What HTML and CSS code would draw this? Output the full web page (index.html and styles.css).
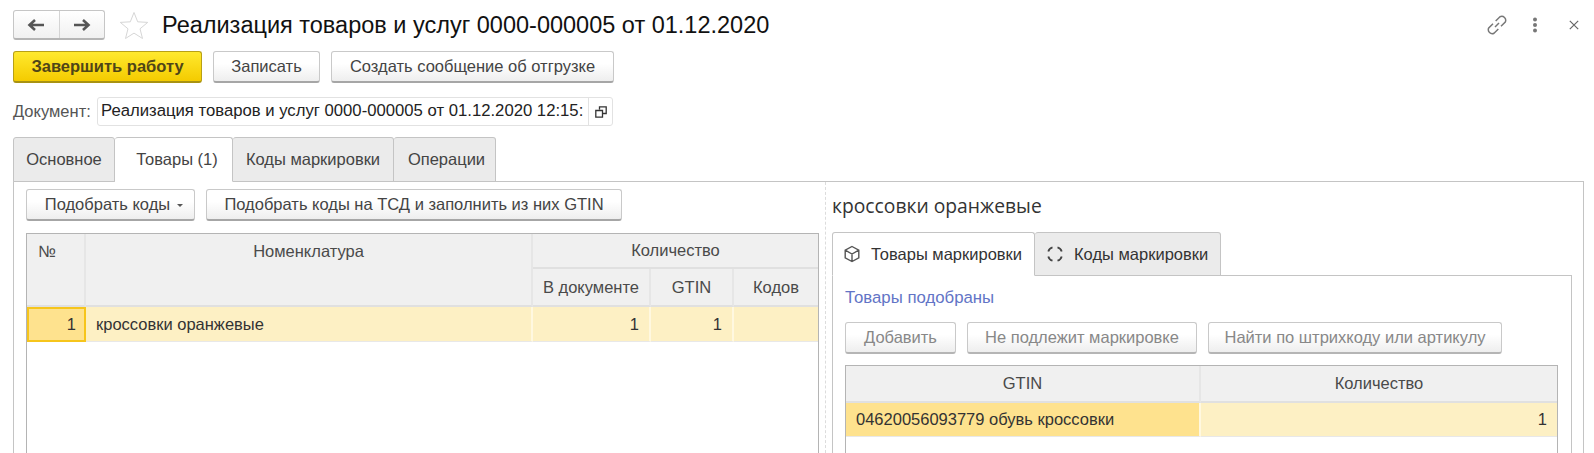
FILE: index.html
```html
<!DOCTYPE html>
<html lang="ru">
<head>
<meta charset="utf-8">
<title>Реализация товаров и услуг</title>
<link rel="stylesheet" href="styles.css">
</head>
<body>
<div class="page">
  <header class="head">
    <div class="nav">
      <button class="nav-btn"><svg width="20" height="14" viewBox="0 0 20 14"><path d="M18 7H5M9 2L3.500 7 9 12" fill="none" stroke="#555" stroke-width="2.600"/></svg></button>
      <button class="nav-btn"><svg width="20" height="14" viewBox="0 0 20 14"><path d="M2 7h13M11 2l5.500 5L11 12" fill="none" stroke="#555" stroke-width="2.600"/></svg></button>
    </div>
    <svg class="star" width="30" height="28" viewBox="0 0 30 28"><path d="M15 1.500l3.700 9.300 10 .6-7.700 6.400 2.500 9.700L15 22.100l-8.500 5.400 2.500-9.700-7.700-6.400 10-.6z" fill="#fff" stroke="#d6d6d6"/></svg>
    <h1 class="title">Реализация товаров и услуг 0000-000005 от 01.12.2020</h1>
    <div class="win-icons">
      <svg width="20" height="20" viewBox="2.500 2.500 15 15"><path d="M8.500 11.500l3-3M7 9l-3.200 3.200a3 3 0 0 0 4 4L11 13M9 7l3.200-3.200a3 3 0 0 1 4 4L13 11" fill="none" stroke="#777" stroke-width="1.100"/></svg>
      <svg width="6" height="16" viewBox="0 0 6 16"><circle cx="3" cy="2.500" r="2" fill="#777"/><circle cx="3" cy="8" r="2" fill="#777"/><circle cx="3" cy="13.500" r="2" fill="#777"/></svg>
      <svg width="10" height="10" viewBox="0 0 10 10"><path d="M.8.800l8.400 8.400M9.200.800L.8 9.200" stroke="#666" stroke-width="1.200"/></svg>
    </div>
  </header>

  <div class="actions">
    <button class="btn btn-primary btn-finish">Завершить работу</button>
    <button class="btn btn-save">Записать</button>
    <button class="btn btn-send">Создать сообщение об отгрузке</button>
  </div>

  <div class="doc-row">
    <span class="doc-label">Документ:</span>
    <div class="doc-field">
      <span class="doc-value">Реализация товаров и услуг 0000-000005 от 01.12.2020 12:15:</span>
      <span class="doc-open"><svg width="12" height="12" viewBox="0 0 12 12"><path d="M4.500 3.500V.8h6.700v6.700H8M.8 4.500h6.700v6.700H.8z" fill="none" stroke="#333" stroke-width="1.300"/></svg></span>
    </div>
  </div>

  <nav class="tabs">
    <div class="tab t1">Основное</div>
    <div class="tab t2 active">Товары (1)</div>
    <div class="tab t3">Коды маркировки</div>
    <div class="tab t4">Операции</div>
  </nav>

  <section class="panel">
    <div class="left">
      <div class="toolbar">
        <button class="btn btn-pick">Подобрать коды<span class="caret"></span></button>
        <button class="btn btn-tsd">Подобрать коды на ТСД и заполнить из них GTIN</button>
      </div>
      <div class="table table-main">
        <div class="th th-no">№</div>
        <div class="th th-name">Номенклатура</div>
        <div class="th th-qty">Количество</div>
        <div class="th th-sub">В документе</div>
        <div class="th th-sub">GTIN</div>
        <div class="th th-sub th-last">Кодов</div>
        <div class="td td-cur num">1</div>
        <div class="td">кроссовки оранжевые</div>
        <div class="td num">1</div>
        <div class="td num">1</div>
        <div class="td td-last"></div>
      </div>
    </div>

    <div class="right">
      <h2 class="sub-title">кроссовки оранжевые</h2>
      <div class="sub-tabs">
        <div class="sub-tab st1 active">
          <svg width="18" height="18" viewBox="0 0 18 18"><path d="M9 1.500l6.800 3.700v7.600L9 16.500l-6.800-3.700V5.200zM2.200 5.200L9 9l6.800-3.800M9 9v7.500" fill="none" stroke="#555" stroke-width="1.400"/></svg>
          Товары маркировки
        </div>
        <div class="sub-tab st2">
          <svg width="18" height="18" viewBox="0 0 18 18"><path d="M6.500 2.300A6 6 0 0 0 2.300 6.500M11.500 2.300a6 6 0 0 1 4.200 4.200M15.700 11.500a6 6 0 0 1-4.200 4.200M6.500 15.700a6 6 0 0 1-4.200-4.200" fill="none" stroke="#444" stroke-width="1.800"/></svg>
          Коды маркировки
        </div>
      </div>
      <div class="sub-panel">
        <div class="status">Товары подобраны</div>
        <div class="toolbar">
          <button class="btn off btn-add">Добавить</button>
          <button class="btn off btn-no">Не подлежит маркировке</button>
          <button class="btn off btn-find">Найти по штрихкоду или артикулу</button>
        </div>
        <div class="table table-gtin">
          <div class="th">GTIN</div>
          <div class="th th-last">Количество</div>
          <div class="td td-sel">04620056093779 обувь кроссовки</div>
          <div class="td td-last num">1</div>
        </div>
      </div>
    </div>
  </section>
</div>
</body>
</html>
```
FILE: styles.css
```css
* { box-sizing: border-box; }
html, body { margin: 0; height: 453px; overflow: hidden; background: #fff; }
body { font: 16.500px "Liberation Sans", Arial, sans-serif; color: #444; }
button { font: inherit; color: inherit; margin: 0; }

.page { height: 453px; overflow: hidden; padding: 10px 10px 0 13px; }

.head { display: flex; align-items: center; height: 30px; }
.nav { display: flex; width: 92px; height: 30px; border: 1px solid #c6c6c6; border-bottom: 2px solid #b5b5b5; border-radius: 3px; background: linear-gradient(#fff, #f1f1f1); }
.nav-btn { flex: 1; padding: 0; border: 0; background: none; display: flex; align-items: center; justify-content: center; }
.nav-btn + .nav-btn { border-left: 1px solid #d4d4d4; }
.star { margin: 0 13px 0 14px; flex: none; }
.title { margin: 0; font-weight: 400; font-size: 23.500px; color: #111; white-space: nowrap; flex: 1; }
.win-icons { display: flex; align-items: center; width: 100px; padding-left: 3px; flex: none; }
.win-icons svg:nth-child(1) { margin-right: 25px; }
.win-icons svg:nth-child(2) { margin-right: 31px; }

.actions { display: flex; gap: 11px; margin-top: 11px; }
.btn { height: 32px; padding: 0; background: linear-gradient(#fff 40%, #eee); border: 1px solid #c9c9c9; border-bottom: 2px solid #a6a6a6; border-radius: 3px; white-space: nowrap; text-align: center; }
.btn-primary { background: linear-gradient(#ffe92e, #f4cb00); border-color: #b8a015; border-bottom-color: #a89212; font-weight: 700; color: #4f4518; }
.btn-finish { width: 189px; }
.btn-save { width: 107px; }
.btn-send { width: 283px; }

.doc-row { display: flex; align-items: center; margin-top: 14px; height: 29px; }
.doc-label { width: 84px; color: #555; white-space: nowrap; }
.doc-field { display: flex; width: 516px; height: 29px; border: 1px solid #e2e2e2; border-radius: 3px; }
.doc-value { flex: 1; padding-left: 3px; font-size: 16.700px; line-height: 26px; color: #222; white-space: nowrap; overflow: hidden; }
.doc-open { width: 24px; flex: none; border-left: 1px solid #e2e2e2; display: flex; align-items: center; justify-content: center; }

.tabs { display: flex; margin-top: 11px; height: 45px; margin-bottom: -1px; position: relative; }
.tab { display: flex; align-items: center; justify-content: center; height: 45px; background: #ebebeb; border: 1px solid #c4c4c4; border-left: 0; border-radius: 3px 3px 0 0; color: #444; }
.t1 { width: 102px; border-left: 1px solid #c4c4c4; }
.t2 { width: 118px; padding-left: 7px; }
.t3 { width: 161px; }
.t4 { width: 102px; padding-left: 4px; }
.tab.active { background: #fff; border-bottom-color: #fff; }

.panel { display: flex; height: 272px; border: 1px solid #c4c4c4; border-bottom: 0; }
.left { width: 811px; padding: 7px 6px 0 12px; flex: none; }
.toolbar { display: flex; gap: 11px; }
.btn-pick { width: 169px; padding-left: 7px; }
.caret { display: inline-block; margin-left: 7px; vertical-align: middle; border: 3px solid transparent; border-top-color: #555; border-bottom: 0; }
.btn-tsd { width: 416px; }

.table { display: grid; border: 1px solid #b4b4b4; border-bottom: 0; height: 230px; align-content: start; }
.table-main { margin-top: 12px; grid-template-columns: 59px 447px 118px 83px 84px; grid-template-rows: 35px 38px 35px; }
.th { display: flex; align-items: center; justify-content: center; background: #f0f0f0; border-right: 2px solid #e6e6e6; border-bottom: 2px solid #e0e0e0; color: #4a4a4a; }
.th-no, .th-name { grid-row: span 2; align-items: flex-start; padding-top: 8px; }
.th-no { justify-content: flex-start; padding-left: 11px; }
.th-qty { grid-column: span 3; border-right: 0; }
.th-last { border-right: 0; }
.td { display: flex; align-items: center; padding: 0 10px; background: #fdf0c4; border-right: 2px solid #fff8e0; border-bottom: 1px solid #e8e8e8; color: #333; white-space: nowrap; }
.td-last { border-right: 0; }
.num { justify-content: flex-end; }
.td-cur { background: #fee28e; border: 2px solid #f6c51c; padding-right: 8px; }

.right { flex: 1; min-width: 0; border-left: 1px dashed #dcdcdc; padding: 0 11px 0 6px; }
.sub-title { margin: 0; height: 50px; padding-top: 11px; font: 400 19.300px/26px "Open Sans", sans-serif; color: #333; }
.sub-tabs { display: flex; height: 44px; margin-bottom: -1px; position: relative; }
.sub-tab { display: flex; align-items: center; gap: 10px; height: 44px; padding-left: 10px; background: #ebebeb; border: 1px solid #c4c4c4; border-left: 0; border-radius: 3px 3px 0 0; color: #333; white-space: nowrap; }
.st1 { width: 203px; border-left: 1px solid #c4c4c4; }
.st2 { width: 186px; padding-left: 11px; }
.sub-tab.active { background: #fff; border-bottom-color: #fff; }
.sub-panel { border: 1px solid #c4c4c4; border-bottom: 0; height: 180px; padding: 0 13px 0 12px; }
.status { height: 46px; padding-top: 10px; font-size: 16.800px; line-height: 24px; color: #6274c6; }
.off { color: #888; border-bottom-color: #b5b5b5; }
.btn-add { width: 111px; }
.btn-no { width: 230px; }
.btn-find { width: 294px; }
.table-gtin { margin-top: 11px; height: 90px; grid-template-columns: 355px 1fr; grid-template-rows: 37px 34px; }
.td-sel { background: #fee28e; }
```
